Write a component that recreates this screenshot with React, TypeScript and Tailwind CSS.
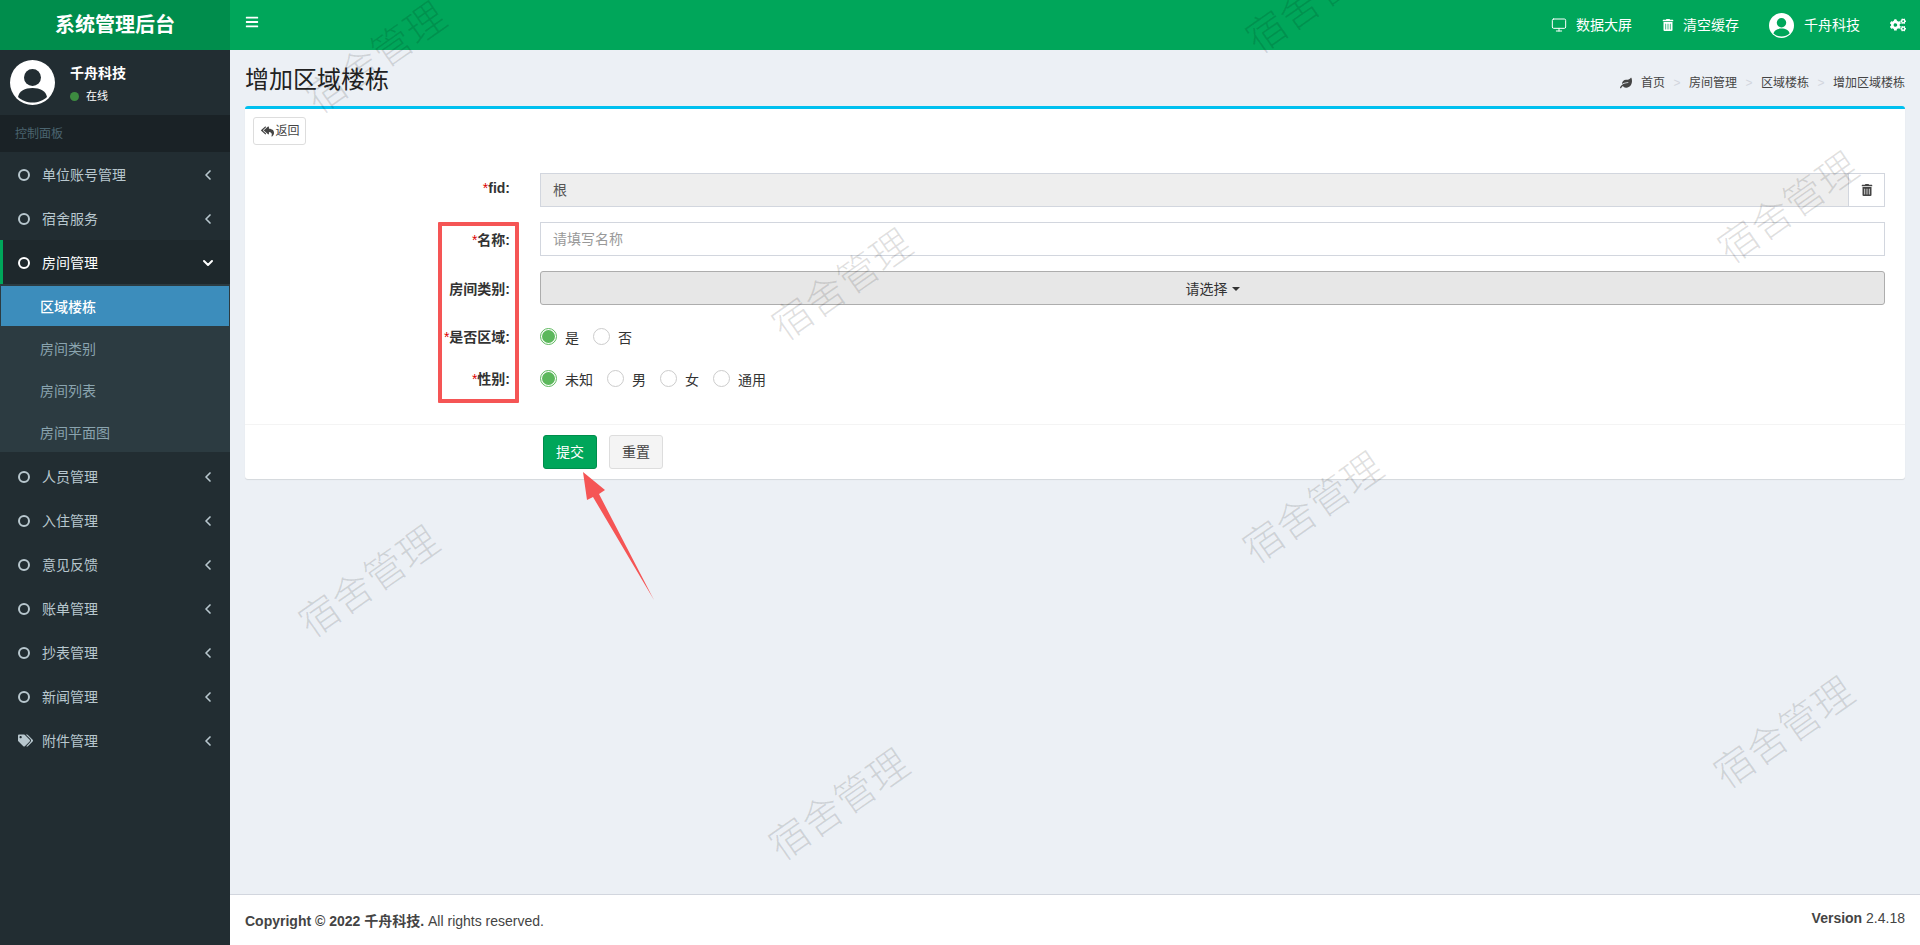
import React from "react";
import { FaBars, FaCogs, FaLeaf, FaReplyAll, FaTags, FaTrashAlt } from "react-icons/fa";
import { ChevronDown, ChevronLeft, Monitor } from "lucide-react";

const FONT = "font-['Liberation_Sans','Noto_Sans_CJK_SC',sans-serif]";

function Avatar({ cls, fill }: { cls: string; fill: string }) {
  return (
    <svg viewBox="0 0 45 45" className={cls}>
      <circle cx="22.5" cy="22.5" r="22.5" fill="#fff" />
      <circle cx="22.5" cy="17.5" r="8.5" fill={fill} />
      <path d="M8 37c1-6 7-9 14.5-9S36 31 37 37c-3.500 3.500-9 5.500-14.500 5.500S11.500 40.500 8 37z" fill={fill} />
    </svg>
  );
}

function MenuItem({ label, icon, open }: { label: string; icon?: React.ReactNode; open?: boolean }) {
  return (
    <div className={`flex h-11 items-center pt-px text-sm ${open ? "border-l-[3px] border-[#00a65a] bg-[#1e282c] pl-[15px] text-white" : "pl-[18px] text-[#b8c7ce]"}`}>
      <span className="flex w-6 items-center">{icon ?? <span className="h-3 w-3 rounded-full border-2 border-current" />}</span>
      <span className="flex-1">{label}</span>
      <span className="mr-[16px] flex w-3 justify-center">
        {open ? <ChevronDown className="h-4 w-4 shrink-0" strokeWidth={3} /> : <ChevronLeft className="h-4 w-4 shrink-0" strokeWidth={2.5} />}
      </span>
    </div>
  );
}

function SubItem({ label, active }: { label: string; active?: boolean }) {
  return (
    <div className={`flex items-center text-sm ${active ? "mx-px h-10 bg-[#3c8dbc] pl-[39px] pt-[2px] font-medium text-white" : "h-[42px] pl-[40px] pt-[3px] text-[#8aa4af]"}`}>
      {label}
    </div>
  );
}

function Row({ label, required, children, cls, labelCls = "pt-[2px]" }: { label: string; required?: boolean; children: React.ReactNode; cls: string; labelCls?: string }) {
  return (
    <div className={`flex items-center ${cls}`}>
      <label className={`w-[265px] text-right text-sm font-bold text-[#333] ${labelCls}`}>
        {required && <span className="font-normal text-[#dd0000]">*</span>}
        {label}:
      </label>
      <div className="ml-[30px] flex-1 pr-[20px]">{children}</div>
    </div>
  );
}

function Radio({ label, checked, cls }: { label: string; checked?: boolean; cls: string }) {
  return (
    <span className={`flex items-center text-sm text-[#333] ${cls}`}>
      <span className={`mr-2 flex h-[17px] w-[17px] items-center justify-center rounded-full border ${checked ? "border-[#5cb85c]" : "border-[#ccc]"} bg-white`}>
        {checked && <span className="h-[13px] w-[13px] rounded-full bg-[#5cb85c]" />}
      </span>
      <span className="pt-[3px]">{label}</span>
    </span>
  );
}

const crumbs = ["房间管理", "区域楼栋", "增加区域楼栋"];
const marks = [
  "left-[376px] top-[58px]",
  "left-[842px] top-[285px]",
  "left-[1316px] top-[-2px]",
  "left-[1788px] top-[208px]",
  "left-[369px] top-[582px]",
  "left-[839px] top-[805px]",
  "left-[1313px] top-[508px]",
  "left-[1784px] top-[733px]",
];

export default function App() {
  return (
    <div className={`relative flex h-[945px] overflow-hidden bg-[#ecf0f5] ${FONT}`}>
      <aside className="flex w-[230px] shrink-0 flex-col bg-[#222d32]">
        <div className="flex h-[50px] items-center justify-center bg-[#008d4c] text-xl font-bold text-white">系统管理后台</div>
        <div className="flex h-[65px] pl-2.5 pt-2.5">
          <Avatar cls="h-[45px] w-[45px]" fill="#222d32" />
          <div className="ml-[15px] pt-[3px] text-white">
            <div className="text-sm font-bold leading-[20px]">千舟科技</div>
            <div className="mt-[5px] flex items-center text-[11px] leading-4">
              <span className="mr-[7px] h-[9px] w-[9px] rounded-full bg-[#3d8b40]" />
              在线
            </div>
          </div>
        </div>
        <div className="flex h-[37px] items-center bg-[#1a2226] pl-[15px] pt-px text-xs text-[#4b646f]">控制面板</div>
        <MenuItem label="单位账号管理" />
        <MenuItem label="宿舍服务" />
        <MenuItem label="房间管理" open />
        <div className="mb-0.5 bg-[#2c3b41] pt-0.5">
          <SubItem label="区域楼栋" active />
          <SubItem label="房间类别" />
          <SubItem label="房间列表" />
          <SubItem label="房间平面图" />
        </div>
        <MenuItem label="人员管理" />
        <MenuItem label="入住管理" />
        <MenuItem label="意见反馈" />
        <MenuItem label="账单管理" />
        <MenuItem label="抄表管理" />
        <MenuItem label="新闻管理" />
        <MenuItem label="附件管理" icon={<FaTags className="text-[15px]" />} />
      </aside>

      <main className="flex min-w-0 flex-1 flex-col">
        <header className="flex h-[50px] shrink-0 items-center bg-[#00a65a] pl-[15px] text-sm text-white">
          <FaBars className="-mt-[7px] text-[14px]" />
          <div className="ml-auto flex items-center">
            <Monitor className="h-4 w-4" strokeWidth={1.5} />
            <span className="ml-[9px]">数据大屏</span>
            <FaTrashAlt className="ml-[30px] text-[12px]" />
            <span className="ml-[9px]">清空缓存</span>
            <Avatar cls="ml-[30px] h-[25px] w-[25px]" fill="#00a65a" />
            <span className="ml-[10px]">千舟科技</span>
            <FaCogs className="ml-[30px] mr-[14px] text-[16px]" />
          </div>
        </header>

        <div className="flex h-[56px] shrink-0 items-center justify-between pl-[15px] pr-[15px]">
          <h1 className="mt-[3px] text-2xl leading-[34px] text-[#222]">增加区域楼栋</h1>
          <div className="mt-[9px] flex items-center text-xs text-[#444]">
            <FaLeaf className="mr-[9px] text-xs" />
            <span>首页</span>
            {crumbs.map((c) => (
              <React.Fragment key={c}>
                <span className="px-[8.5px] text-[#d2d6de]">&gt;</span>
                <span>{c}</span>
              </React.Fragment>
            ))}
          </div>
        </div>

        <section className="mx-[15px] h-[373px] shrink-0 rounded-[3px] border-t-[3px] border-[#00c0ef] bg-white shadow-[0_1px_1px_rgba(0,0,0,0.1)]">
          <div className="pl-2 pt-2">
            <button className="flex h-7 w-[53px] items-center justify-center rounded-[3px] border border-[#ddd] bg-white pl-[2px] text-xs text-[#444]">
              <FaReplyAll className="mr-px text-[13px]" />
              返回
            </button>
          </div>
          <div className="h-[279px] pt-7">
            <Row label="fid" required cls="h-[34px]" labelCls="pb-[5px]">
              <div className="flex h-[34px]">
                <div className="flex flex-1 items-center border border-[#d2d6de] bg-[#eee] pl-3 text-sm text-[#555]">根</div>
                <div className="flex w-[36px] items-center justify-center border border-l-0 border-[#d2d6de] text-[#444]">
                  <FaTrashAlt className="text-[12px]" />
                </div>
              </div>
            </Row>
            <Row label="名称" required cls="mt-[15px] h-[34px]">
              <input readOnly placeholder="请填写名称" className="h-[34px] w-full border border-[#d2d6de] pl-3 text-sm outline-none placeholder:text-[#999]" />
            </Row>
            <Row label="房间类别" cls="mt-[15px] h-[34px]">
              <div className="flex h-[34px] items-center justify-center rounded-[3px] border border-[#adadad] bg-[#e7e7e7] pt-px text-sm text-[#333]">
                请选择
                <span className="ml-1 h-0 w-0 border-x-4 border-t-4 border-x-transparent border-t-[#333]" />
              </div>
            </Row>
            <Row label="是否区域" required cls="mt-[14px] h-[34px]">
              <div className="flex">
                <Radio label="是" checked cls="w-[53px]" />
                <Radio label="否" cls="w-[53px]" />
              </div>
            </Row>
            <Row label="性别" required cls="mt-[8px] h-[34px]">
              <div className="flex">
                <Radio label="未知" checked cls="w-[67px]" />
                <Radio label="男" cls="w-[53px]" />
                <Radio label="女" cls="w-[53px]" />
                <Radio label="通用" cls="w-[67px]" />
              </div>
            </Row>
          </div>
          <div className="flex h-[55px] items-start border-t border-[#f4f4f4] pl-[298px] pt-[10px]">
            <button className="h-[34px] w-[54px] rounded-[3px] border border-[#008d4c] bg-[#00a65a] text-sm text-white">提交</button>
            <button className="ml-3 h-[34px] w-[54px] rounded-[3px] border border-[#ddd] bg-[#f4f4f4] text-sm text-[#444]">重置</button>
          </div>
        </section>

        <div className="flex-1" />
        <footer className="flex h-[51px] shrink-0 items-center justify-between border-t border-[#d2d6de] bg-white px-[15px] text-sm text-[#444]">
          <div className="mt-[2px]"><b>Copyright © 2022 千舟科技.</b> All rights reserved.</div>
          <div className="-mt-[4px]"><b>Version</b> 2.4.18</div>
        </footer>
      </main>

      {marks.map((m) => (
        <div key={m} className={`pointer-events-none absolute -translate-x-1/2 -translate-y-1/2 -rotate-[35deg] whitespace-nowrap text-[40px] font-light leading-none text-black/[0.12] ${m}`}>
          宿舍管理
        </div>
      ))}

      <div className="pointer-events-none absolute left-[438px] top-[222px] h-[181px] w-[81px] rounded-[1px] border-4 border-[#f55555]" />
      <svg className="pointer-events-none absolute left-[575px] top-[465px] h-[145px] w-[90px]" viewBox="575 465 90 145">
        <polygon points="583,472 605,490 599,494 654,600 593,497 587,500" fill="#f55555" />
      </svg>
    </div>
  );
}
